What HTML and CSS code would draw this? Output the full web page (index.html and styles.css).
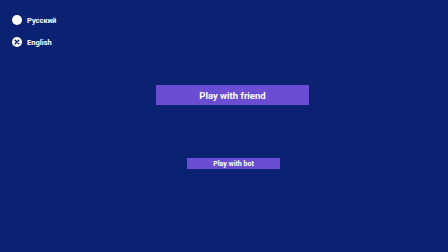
FILE: index.html
```html
<!DOCTYPE html>
<html lang="en">

<head>
  <meta charset="UTF-8" />
  <meta name="viewport" content="width=device-width, initial-scale=1.0" />
  <title>Game menu</title>
  <link rel="stylesheet" href="styles.css">
</head>

<body>
  <div class="languages">
    <div class="lang">
      <span class="dot"></span>
      <span class="lang-name">Русский</span>
    </div>
    <div class="lang">
      <svg class="dot-icon" viewBox="0 0 10 10" width="10" height="10">
        <circle cx="5" cy="5" r="5" fill="#ffffff" />
        <path d="M3.2 3.2 L6.8 6.8 M6.8 3.2 L3.2 6.8" stroke="#0b2272" stroke-width="1.4" stroke-linecap="round" />
      </svg>
      <span class="lang-name">English</span>
    </div>
  </div>

  <div class="menu">
    <button class="btn btn-friend">Play with friend</button>
    <button class="btn btn-bot">Play with bot</button>
  </div>
</body>

</html>
```

FILE: styles.css
```css
body,
html {
  margin: 0;
  height: 100%;
  font-family: Roboto, "Liberation Sans", sans-serif;
}

body {
  background-color: #0b2272;
  color: #ffffff;
}

.languages {
  display: flex;
  flex-direction: column;
  gap: 12px;
  padding: 15px 0 0 12px;
}

.lang {
  display: flex;
  align-items: center;
  gap: 5px;
  height: 10px;
}

.dot {
  width: 10px;
  height: 10px;
  border-radius: 50%;
  background-color: #ffffff;
}

.dot-icon {
  display: block;
}

.lang-name {
  font-size: 7.5px;
  font-weight: 700;
}

.menu {
  display: flex;
  flex-direction: column;
  align-items: center;
  padding-left: 17px;
  margin-top: 38px;
}

.btn {
  border: none;
  padding: 0;
  color: #ffffff;
  font-family: Roboto, "Liberation Sans", sans-serif;
  font-weight: 700;
  background-color: #6a4dd3;
  cursor: pointer;
}

.btn-friend {
  width: 153px;
  height: 20px;
  font-size: 9.5px;
}

.btn-bot {
  width: 93px;
  height: 11px;
  font-size: 7px;
  margin-top: 53px;
  margin-left: 2px;
}
```
